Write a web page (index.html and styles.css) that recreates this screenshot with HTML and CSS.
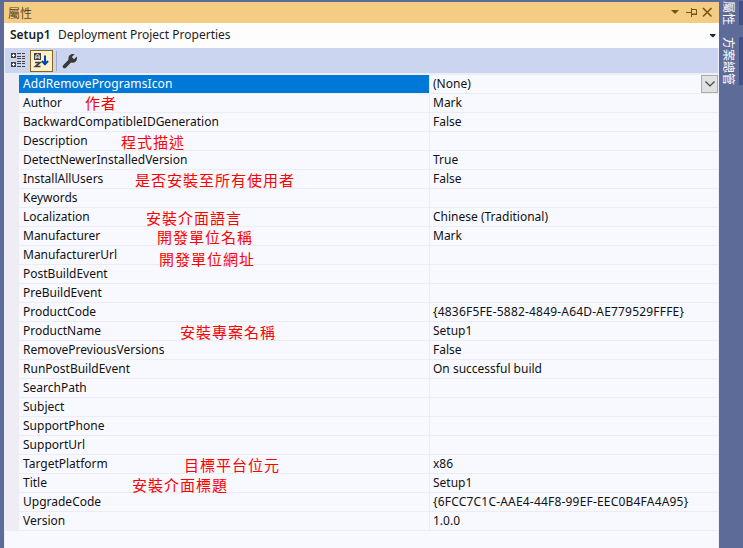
FILE: index.html
```html
<!DOCTYPE html>
<html lang="zh-Hant">
<head>
<meta charset="utf-8">
<title>屬性</title>
<link rel="stylesheet" href="styles.css">
</head>
<body>
<main class="panel">
  <header class="titlebar">
    <span class="caption">屬性</span>
    <svg class="window-icons" width="48" height="21" viewBox="0 0 48 21" fill="none" stroke="#795411">
      <path d="M4 8h8L8 12z" fill="#795411" stroke="none"/>
      <path d="M19 10.500h5M24.500 6v9M24 7.500h5.500v5M24 12h6M24 12.500h6"/>
      <path d="M36 6l8.500 8.500M44.500 6L36 14.500" stroke-width="1.600"/>
    </svg>
  </header>
  <div class="object"><b>Setup1</b><span>Deployment Project Properties</span>
    <svg class="drop" width="6" height="4" viewBox="0 0 6 4"><path d="M0 0h5.500v1L3 3.500 0 1z" fill="#1b293e"/></svg>
  </div>
  <div class="toolbar">
    <svg class="category" width="15" height="15" viewBox="0 0 15 15">
      <path d="M0 0h5v5H0zM0 9h5v5H0z" fill="#424242"/>
      <path d="M1 2.500h3M2.500 1v3M1 11.500h3M2.500 10v3" stroke="#fff"/>
      <path d="M6 .5h4M11 .5h3M6 3.500h4M11 3.500h3M6 5.500h4M11 5.500h3M6 8.500h4M11 8.500h3M6 10.500h4M11 10.500h3M6 13.500h4M11 13.500h3" stroke="#424242"/>
    </svg>
    <span class="sort">
      <svg width="17" height="17" viewBox="0 0 17 17" fill="none">
        <path d="M1 1h7v7H1z" fill="#424242"/>
        <path d="M2.800 7V3.500l1.700-1.200 1.700 1.200V7M3 5.200h3" stroke="#fff"/>
        <path d="M2 10.500h5L2.500 14.500H7.500" stroke="#424242" stroke-width="1.700"/>
        <path d="M12 3.500v8M9 9l3 3.200L15 9" stroke="#0048a8" stroke-width="2"/>
      </svg>
    </span>
    <i class="rule"></i>
    <svg class="wrench" width="16" height="16" viewBox="0 0 16 16"><path d="M1.200 12.300L6.500 6.800C5.700 3 8.500 .3 12.600 1.200L9.800 4.100l2.200 2.200 2.900-2.800c.9 4.300-2 7-5.900 6.100l-5.100 5.200c-1.700 1.600-4.400-.7-2.700-2.500z" fill="#383838"/></svg>
  </div>
  <section class="grid">
    <div class="row selected"><span class="name">AddRemoveProgramsIcon</span><span class="value">(None)</span><span class="pick"><svg width="12" height="8" viewBox="0 0 12 8"><path d="M1.500 1.500L6 6l4.500-4.500" fill="none" stroke="#444" stroke-width="1.200"/></svg></span></div>
    <div class="row"><span class="name">Author</span><span class="value">Mark</span><em class="note author">作者</em></div>
    <div class="row"><span class="name">BackwardCompatibleIDGeneration</span><span class="value">False</span></div>
    <div class="row"><span class="name">Description</span><span class="value"></span><em class="note description">程式描述</em></div>
    <div class="row"><span class="name">DetectNewerInstalledVersion</span><span class="value">True</span></div>
    <div class="row"><span class="name">InstallAllUsers</span><span class="value">False</span><em class="note users">是否安裝至所有使用者</em></div>
    <div class="row"><span class="name">Keywords</span><span class="value"></span></div>
    <div class="row"><span class="name">Localization</span><span class="value">Chinese (Traditional)</span><em class="note language">安裝介面語言</em></div>
    <div class="row"><span class="name">Manufacturer</span><span class="value">Mark</span><em class="note maker">開發單位名稱</em></div>
    <div class="row"><span class="name">ManufacturerUrl</span><span class="value"></span><em class="note maker-url">開發單位網址</em></div>
    <div class="row"><span class="name">PostBuildEvent</span><span class="value"></span></div>
    <div class="row"><span class="name">PreBuildEvent</span><span class="value"></span></div>
    <div class="row"><span class="name">ProductCode</span><span class="value code">{4836F5FE-5882-4849-A64D-AE779529FFFE}</span></div>
    <div class="row"><span class="name">ProductName</span><span class="value">Setup1</span><em class="note product">安裝專案名稱</em></div>
    <div class="row"><span class="name">RemovePreviousVersions</span><span class="value">False</span></div>
    <div class="row"><span class="name">RunPostBuildEvent</span><span class="value">On successful build</span></div>
    <div class="row"><span class="name">SearchPath</span><span class="value"></span></div>
    <div class="row"><span class="name">Subject</span><span class="value"></span></div>
    <div class="row"><span class="name">SupportPhone</span><span class="value"></span></div>
    <div class="row"><span class="name">SupportUrl</span><span class="value"></span></div>
    <div class="row"><span class="name">TargetPlatform</span><span class="value">x86</span><em class="note platform">目標平台位元</em></div>
    <div class="row"><span class="name">Title</span><span class="value">Setup1</span><em class="note title">安裝介面標題</em></div>
    <div class="row"><span class="name">UpgradeCode</span><span class="value code">{6FCC7C1C-AAE4-44F8-99EF-EEC0B4FA4A95}</span></div>
    <div class="row"><span class="name">Version</span><span class="value">1.0.0</span></div>
  </section>
</main>
<aside class="dock">
  <div class="tab properties">屬性</div>
  <div class="tab solution">方案總管</div>
</aside>
</body>
</html>
```
FILE: styles.css
```css
* { box-sizing: border-box; }
body {
  margin: 0;
  width: 743px;
  height: 548px;
  overflow: hidden;
  display: flex;
  padding: 2px 0 0 4px;
  background: #5d6b99;
  color: #1e1e1e;
  font: 12px "Noto Sans", "Noto Sans CJK TC", sans-serif;
}
svg { display: block; flex: none; }
.panel { width: 715px; height: 546px; flex: none; background: #f8f9ff; border-left: 1px solid #eeeef6; border-right: 1px solid #eeeef6; }
.titlebar { height: 21px; margin: 0 -1px; background: #f5cc84; display: flex; align-items: center; justify-content: space-between; padding: 0 5px 0 4px; color: #5f4618; }
.window-icons { margin-right: -1px; }
.object { height: 25px; margin: 0 -1px; background: #fdfdfd; display: flex; align-items: center; padding: 0 3px 2px 6px; }
.object b { font-weight: 600; width: 48px; }
.drop { margin: 3px 0 0 auto; }
.toolbar { height: 25px; background: #cbd5f0; display: flex; align-items: center; padding-left: 6px; }
.category { margin-right: 4px; }
.sort { width: 23px; height: 22px; border: 1px solid #8a6317; background: #fdf0cf; display: grid; place-items: center; }
.rule { width: 1px; height: 20px; margin: 0 5px 0 3px; background: #a0aacb; }
.grid { border-top: 2px solid #eeeef6; }
.row { position: relative; display: flex; height: 19px; border-left: 14px solid #eeedf4; line-height: 17px; color: #111; }
.name, .value { border-bottom: 1px solid #ecedf4; padding-left: 4px; white-space: nowrap; }
.name { width: 411px; border-right: 1px solid #ecedf4; }
.value { flex: 1; padding-left: 3px; }
.code { letter-spacing: .19px; }
.selected .name { background: #0078d7; color: #fff; letter-spacing: .1px; }
.pick { position: absolute; right: 0; top: 0; width: 17px; height: 18px; border: 1px solid #adadad; background: #e1e1e1; display: grid; place-items: center; }
.note { position: absolute; top: 1px; font: 15px/17px "Noto Sans CJK TC", sans-serif; letter-spacing: 1px; color: #f00; white-space: nowrap; }
.author { left: 66px; top: 0; }
.description { left: 102px; }
.users { left: 116px; }
.language { left: 127px; }
.maker { left: 138px; }
.maker-url { left: 140px; top: 4px; }
.product { left: 161px; }
.platform { left: 165px; }
.title { left: 113px; top: 2px; }
.dock { flex: 1; display: flex; flex-direction: column; margin-top: -1px; color: #fff; }
.tab { writing-mode: vertical-rl; text-orientation: sideways; width: 24px; border-right: 4px solid #40508d; line-height: 20px; white-space: nowrap; padding-right: 1px; }
.properties { height: 24px; margin-bottom: 12px; }
.solution { height: 48px; }
```
